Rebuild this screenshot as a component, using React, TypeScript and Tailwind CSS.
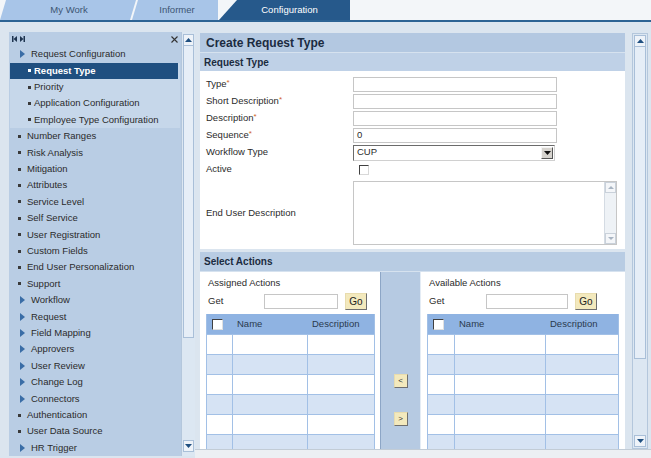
import React from "react";

const leftItems: [string, "arrow" | "dot"][] = [
  ["Number Ranges", "dot"],
  ["Risk Analysis", "dot"],
  ["Mitigation", "dot"],
  ["Attributes", "dot"],
  ["Service Level", "dot"],
  ["Self Service", "dot"],
  ["User Registration", "dot"],
  ["Custom Fields", "dot"],
  ["End User Personalization", "dot"],
  ["Support", "dot"],
  ["Workflow", "arrow"],
  ["Request", "arrow"],
  ["Field Mapping", "arrow"],
  ["Approvers", "arrow"],
  ["User Review", "arrow"],
  ["Change Log", "arrow"],
  ["Connectors", "arrow"],
  ["Authentication", "dot"],
  ["User Data Source", "dot"],
  ["HR Trigger", "arrow"],
];

function Arrow() {
  return (
    <svg width="5" height="8" viewBox="0 0 5 8" className="shrink-0">
      <path d="M0 0L5 4L0 8Z" fill="#3a6da6" />
    </svg>
  );
}

function NavRow({ label, kind }: { label: string; kind: "arrow" | "dot" }) {
  if (kind === "arrow") {
    return (
      <div className="flex items-center h-[16.4px] pl-[10px]">
        <Arrow />
        <span className="ml-[6px]">{label}</span>
      </div>
    );
  }
  return (
    <div className="flex items-center h-[16.4px] pl-[8px]">
      <span className="w-[3px] h-[3px] bg-[#3a3a3a] shrink-0" />
      <span className="ml-[6px]">{label}</span>
    </div>
  );
}

function SubRow({ label, selected }: { label: string; selected?: boolean }) {
  return (
    <div
      className={
        selected
          ? "flex items-center h-[16.4px] pl-[18px] mr-[2px] bg-[#1f4f80] text-white font-bold"
          : "flex items-center h-[16.4px] pl-[18px]"
      }
    >
      <span className={selected ? "w-[3px] h-[3px] bg-white shrink-0" : "w-[3px] h-[3px] bg-[#3a3a3a] shrink-0"} />
      <span className="ml-[3px]">{label}</span>
    </div>
  );
}

function ScrollUp() {
  return (
    <div className="h-[12px] mx-[1px] bg-[#eef3f9] border border-[#a9bfd8] flex items-center justify-center">
      <svg width="7" height="4" viewBox="0 0 7 4">
        <path d="M0 4L3.5 0L7 4Z" fill="#1f4f80" />
      </svg>
    </div>
  );
}

function ScrollDown() {
  return (
    <div className="h-[12px] mx-[1px] bg-[#eef3f9] border border-[#a9bfd8] flex items-center justify-center">
      <svg width="7" height="4" viewBox="0 0 7 4">
        <path d="M0 0L3.5 4L7 0Z" fill="#1f4f80" />
      </svg>
    </div>
  );
}

function TextInput({ value }: { value?: string }) {
  return (
    <div className="w-[204px] h-[15px] border border-[#c6c6c6] bg-white flex items-center pl-[3px] text-[9.5px]">
      {value}
    </div>
  );
}

function Req() {
  return <span className="text-[#d0622a] text-[8px] align-top">*</span>;
}

function GoButton() {
  return (
    <div className="w-[22px] h-[17px] bg-[#f3e9bd] border border-t-[#e8dcae] border-l-[#e8dcae] border-r-[#6f6f6f] border-b-[#6f6f6f] flex items-center justify-center text-[10px] text-[#222]">
      Go
    </div>
  );
}

function SmallButton({ label }: { label: string }) {
  return (
    <div className="w-[14px] h-[14px] bg-[#f3e9bd] border border-t-[#e8dcae] border-l-[#e8dcae] border-r-[#6f6f6f] border-b-[#6f6f6f] flex items-center justify-center text-[8px] text-[#333]">
      {label}
    </div>
  );
}

function ActionTable({ c1, c2 }: { c1: string; c2: string }) {
  const rows = [0, 1, 2, 3, 4, 5];
  return (
    <div className="border-l border-r border-[#a2c0e6]">
      <div className="flex h-[20px] bg-[#8fb3e2] items-center text-[9.5px] text-[#2a3a4e]">
        <div className={c1 + " h-full flex items-center pl-[5px]"}>
          <span className="w-[11px] h-[11px] bg-white border border-t-[#404040] border-l-[#404040] border-r-[#e0e0e0] border-b-[#e0e0e0]" />
        </div>
        <div className={c2 + " pl-[4px]"}>Name</div>
        <div className="flex-1 pl-[4px]">Description</div>
      </div>
      {rows.map((r) => (
        <div
          key={r}
          className={
            r % 2 === 0
              ? "flex h-[20px] bg-white border-t border-[#a2c0e6]"
              : "flex h-[20px] bg-[#d6e3f4] border-t border-[#a2c0e6]"
          }
        >
          <div className={c1 + " border-r border-[#a2c0e6]"} />
          <div className={c2 + " border-r border-[#a2c0e6]"} />
          <div className="flex-1" />
        </div>
      ))}
    </div>
  );
}

export default function App() {
  return (
    <div className="w-[651px] h-[458px] overflow-hidden bg-[#dbe5ef] flex flex-col font-['Liberation_Sans',Arial,sans-serif] text-[9.5px] text-[#2b2b2b]">
      {/* Tabs */}
      <div className="flex h-[20px] bg-[#f3f6f9] shrink-0">
        <div className="w-[136px] bg-[#a8c5e8] [clip-path:polygon(6px_0,100%_0,calc(100%-6px)_100%,0_100%)] flex items-center justify-center text-[#3d5573] pl-[2px]">
          My Work
        </div>
        <div className="w-[86px] -ml-[4px] bg-[#a8c5e8] [clip-path:polygon(6px_0,100%_0,100%_100%,0_100%)] flex items-center justify-center text-[#3d5573] pl-[4px]">
          Informer
        </div>
        <div className="w-[131px] ml-[1px] bg-[#26598b] [clip-path:polygon(18px_0,100%_0,100%_100%,0_100%)] flex items-center justify-center text-white pl-[10px]">
          Configuration
        </div>
      </div>
      <div className="h-[2px] bg-[#2c6394] shrink-0" />

      <div className="flex flex-1 min-h-0 pt-[10px]">
        {/* Left navigation */}
        <div className="ml-[9px] w-[186px] h-[424px] flex bg-[#b9cde4]">
          <div className="w-[172px] flex flex-col">
            <div className="h-[15px] flex items-center pl-[3px] pr-[3px]">
              <svg width="13" height="6" viewBox="0 0 13 6">
                <rect x="0" y="0" width="1.5" height="6" fill="#1f3550" />
                <path d="M5 0L1.5 3L5 6Z" fill="#1f3550" />
                <path d="M8 0L11.5 3L8 6Z" fill="#1f3550" />
                <rect x="11.5" y="0" width="1.5" height="6" fill="#1f3550" />
              </svg>
              <div className="flex-1" />
              <svg width="7" height="7" viewBox="0 0 7 7">
                <path d="M0.5 0.5L6.5 6.5M6.5 0.5L0.5 6.5" stroke="#333" strokeWidth="1.1" />
              </svg>
            </div>
            <div className="pl-[1px] pr-[1px]">
              <NavRow label="Request Configuration" kind="arrow" />
              <div className="bg-[#c6d7ea]">
                <SubRow label="Request Type" selected />
                <SubRow label="Priority" />
                <SubRow label="Application Configuration" />
                <SubRow label="Employee Type Configuration" />
              </div>
              {leftItems.map(([label, kind]) => (
                <NavRow key={label} label={label} kind={kind} />
              ))}
            </div>
          </div>
          <div className="w-[14px] bg-[#dce7f2] border-l border-[#b4c7dc] flex flex-col pt-[2px] pb-[4px]">
            <ScrollUp />
            <div className="h-[292px] mx-[1px] bg-[#e6eef7] border border-[#a9bfd8] border-t-0" />
            <div className="flex-1" />
            <ScrollDown />
          </div>
        </div>

        {/* Right side */}
        <div className="flex flex-col flex-1">
          <div className="flex h-[417px]">
            <div className="ml-[5px] mt-[1px] w-[425px] flex flex-col overflow-hidden">
              <div className="h-[19px] shrink-0 bg-[#b3c8e1] flex items-center pl-[6px] text-[12px] font-bold text-[#1b2b40]">
                Create Request Type
              </div>
              <div className="h-[19px] shrink-0 bg-[#bfd1e7] border-t border-[#d6e2ef] flex items-center pl-[4px] text-[10px] font-bold text-[#1b2b40]">
                Request Type
              </div>
              <div className="h-[178px] shrink-0 bg-white pt-[5px] pl-[6px]">
                <div className="flex items-center h-[17px]">
                  <div className="w-[147px]">
                    Type<Req />
                  </div>
                  <TextInput />
                </div>
                <div className="flex items-center h-[17px]">
                  <div className="w-[147px]">
                    Short Description<Req />
                  </div>
                  <TextInput />
                </div>
                <div className="flex items-center h-[17px]">
                  <div className="w-[147px]">
                    Description<Req />
                  </div>
                  <TextInput />
                </div>
                <div className="flex items-center h-[17px]">
                  <div className="w-[147px]">
                    Sequence<Req />
                  </div>
                  <TextInput value="0" />
                </div>
                <div className="flex items-center h-[17px]">
                  <div className="w-[147px]">Workflow Type</div>
                  <div className="w-[202px] h-[16px] bg-white border border-t-[#6b6b6b] border-l-[#6b6b6b] border-r-[#d0d0d0] border-b-[#d0d0d0] flex items-center pl-[3px]">
                    <span className="flex-1">CUP</span>
                    <div className="w-[12px] h-[12px] mr-[1px] bg-[#d6d3ce] border border-t-[#f4f4f4] border-l-[#f4f4f4] border-r-[#555] border-b-[#555] flex items-center justify-center">
                      <svg width="7" height="4" viewBox="0 0 7 4">
                        <path d="M0 0L3.5 4L7 0Z" fill="#111" />
                      </svg>
                    </div>
                  </div>
                </div>
                <div className="flex items-center h-[17px]">
                  <div className="w-[153px]">Active</div>
                  <span className="w-[10px] h-[10px] bg-white border border-t-[#404040] border-l-[#404040] border-r-[#d8d8d8] border-b-[#d8d8d8]" />
                </div>
                <div className="flex items-center h-[64px] mt-[3px]">
                  <div className="w-[147px]">End User Description</div>
                  <div className="w-[264px] h-[64px] border border-[#c6c6c6] flex justify-end">
                    <div className="w-[12px] bg-[#eef2f6] border-l border-[#d4dbe3] flex flex-col justify-between">
                      <div className="h-[11px] bg-[#f4f6f9] border border-[#c9d1da] flex items-center justify-center">
                        <svg width="6" height="3" viewBox="0 0 6 3">
                          <path d="M0 3L3 0L6 3Z" fill="#a8b4c2" />
                        </svg>
                      </div>
                      <div className="h-[11px] bg-[#f4f6f9] border border-[#c9d1da] flex items-center justify-center">
                        <svg width="6" height="3" viewBox="0 0 6 3">
                          <path d="M0 0L3 3L6 0Z" fill="#a8b4c2" />
                        </svg>
                      </div>
                    </div>
                  </div>
                </div>
              </div>
              <div className="h-[3px] shrink-0" />
              <div className="h-[20px] shrink-0 bg-[#b8cce3] border-b border-[#d6e2ef] flex items-center pl-[4px] text-[10px] font-bold text-[#1b2b40]">
                Select Actions
              </div>
              <div className="flex flex-1 min-h-0">
                <div className="w-[180px] bg-white pl-[6px] pr-[5px]">
                  <div className="h-[11px] mt-[6px] pl-[2px] flex items-center">Assigned Actions</div>
                  <div className="flex items-center h-[17px] mt-[4px] pl-[2px]">
                    <span className="w-[56px]">Get</span>
                    <div className="w-[74px] h-[15px] border border-[#c6c6c6]" />
                    <div className="ml-[7px]">
                      <GoButton />
                    </div>
                  </div>
                  <div className="mt-[4px]">
                    <ActionTable c1="w-[26px]" c2="w-[75px]" />
                  </div>
                </div>
                <div className="w-[41px] bg-[#b6cae2] border-l border-r border-l-[#8da6c6] border-r-[#e4ecf5] flex flex-col items-center pt-[102px]">
                  <SmallButton label="<" />
                  <div className="mt-[24px]">
                    <SmallButton label=">" />
                  </div>
                </div>
                <div className="flex-1 bg-white pl-[6px] pr-[6px]">
                  <div className="h-[11px] mt-[6px] pl-[2px] flex items-center">Available Actions</div>
                  <div className="flex items-center h-[17px] mt-[4px] pl-[2px]">
                    <span className="w-[57px]">Get</span>
                    <div className="w-[82px] h-[15px] border border-[#c6c6c6]" />
                    <div className="ml-[7px]">
                      <GoButton />
                    </div>
                  </div>
                  <div className="mt-[4px]">
                    <ActionTable c1="w-[27px]" c2="w-[91px]" />
                  </div>
                </div>
              </div>
            </div>
            {/* Main scrollbar */}
            <div className="ml-[7px] mt-[1px] w-[16px] bg-[#dce7f2] border border-[#b4c7dc] flex flex-col pt-[1px] pb-[1px]">
              <ScrollUp />
              <div className="h-[312px] mx-[1px] bg-[#e6eef7] border border-[#a9bfd8] border-t-0" />
              <div className="flex-1" />
              <ScrollDown />
            </div>
            <div className="flex-1" />
          </div>
          <div className="flex-1 bg-[#eceff3] border-t border-[#c2ccd6]" />
        </div>
      </div>
    </div>
  );
}
